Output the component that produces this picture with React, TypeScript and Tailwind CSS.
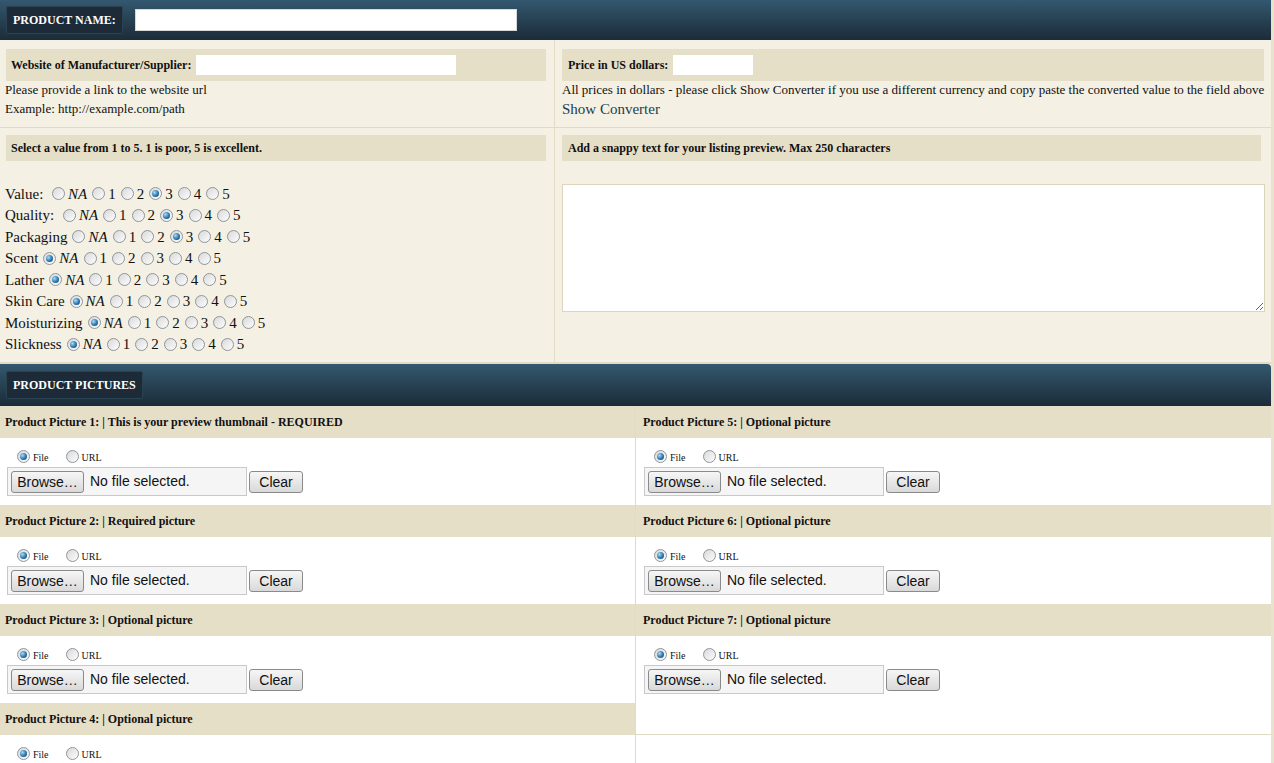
import React from 'react';

const serif = "font-['Liberation_Serif','Times_New_Roman',serif]";
const sans = "font-['Liberation_Sans',Arial,sans-serif]";

const Radio = ({ checked = false }: { checked?: boolean }) => (
  <span className="relative inline-block w-[13px] h-[13px] rounded-full border border-[#8f959b] bg-gradient-to-br from-[#d9d9d9] to-[#fdfdfd] align-middle shrink-0">
    {checked && (
      <span className="absolute left-[2px] top-[2px] w-[7px] h-[7px] rounded-full bg-[radial-gradient(circle_at_35%_35%,#a9dcf8,#2a76ad_55%,#0f3f69)]" />
    )}
  </span>
);

const BarLabel = ({ children }: { children: React.ReactNode }) => (
  <div className="h-[28px] px-[6px] flex items-center bg-[#1c2b37] border border-[#2b4252] rounded-[2px] text-white font-bold text-[12px] uppercase">
    {children}
  </div>
);

const ratings: { label: string; value: string }[] = [
  { label: 'Value:\u00a0', value: '3' },
  { label: 'Quality:\u00a0', value: '3' },
  { label: 'Packaging', value: '3' },
  { label: 'Scent', value: 'NA' },
  { label: 'Lather', value: 'NA' },
  { label: 'Skin Care', value: 'NA' },
  { label: 'Moisturizing', value: 'NA' },
  { label: 'Slickness', value: 'NA' },
];

const options = ['NA', '1', '2', '3', '4', '5'];

const RatingRow = ({ label, value }: { label: string; value: string }) => (
  <div className="h-[21.5px] flex items-center text-[15px] text-[#111] whitespace-pre">
    <span>{label}</span>
    {options.map((o) => (
      <span key={o} className="flex items-center">
        <span className="ml-[5px] mr-[3px] flex">
          <Radio checked={o === value} />
        </span>
        <span className={o === 'NA' ? 'italic' : ''}>{o}</span>
      </span>
    ))}
  </div>
);

const pictures = [
  { n: 1, note: 'This is your preview thumbnail - REQUIRED' },
  { n: 2, note: 'Required picture' },
  { n: 3, note: 'Optional picture' },
  { n: 4, note: 'Optional picture' },
];
const pictures2 = [
  { n: 5, note: 'Optional picture' },
  { n: 6, note: 'Optional picture' },
  { n: 7, note: 'Optional picture' },
];

const PictureItem = ({ n, note, right = false }: { n: number; note: string; right?: boolean }) => (
  <div>
    <div className={`h-[32px] ${right ? 'pl-[7px]' : 'pl-[5px]'} flex items-center bg-[#e6dfc8] text-[12px] font-bold text-[#111]`}>
      Product Picture {n}: | {note}
    </div>
    <div className={`h-[67px] bg-white pt-[11px] ${right ? 'pl-[8px]' : 'pl-[7px]'}`}>
      <div className="h-[14px] flex items-center text-[10px] text-[#111] pl-[10px]">
        <Radio checked />
        <span className="ml-[3px] mt-[2px]">File</span>
        <span className="ml-[17px] flex">
          <Radio />
        </span>
        <span className="ml-[3px] mt-[2px]">URL</span>
      </div>
      <div className={`mt-[4px] flex items-center ${sans}`}>
        <div className="w-[240px] h-[29px] border border-[#c9c9c9] bg-[#f5f5f5] flex items-center px-[3px]">
          <button className="w-[73px] h-[22px] border border-[#8a8a8a] rounded-[3px] bg-gradient-to-b from-[#f6f6f6] to-[#d9d9d9] text-[14px] text-[#111]">
            Browse…
          </button>
          <span className="ml-[6px] text-[14px] text-[#111]">No file selected.</span>
        </div>
        <button className="ml-[2px] w-[54px] h-[22px] border border-[#8a8a8a] rounded-[3px] bg-gradient-to-b from-[#f6f6f6] to-[#d9d9d9] text-[14px] text-[#111]">
          Clear
        </button>
      </div>
    </div>
  </div>
);

const App = () => {
  return (
    <div className={`min-h-[763px] w-[1274px] bg-[#e9e3cd] ${serif}`}>
      <div className="w-[1271px] bg-[#f4f0e3]">
        {/* product name bar */}
        <div className="h-[40px] px-[6px] flex items-center bg-gradient-to-b from-[#34586f] to-[#1b2c39]">
          <BarLabel>Product Name:</BarLabel>
          <input className="ml-[12px] w-[382px] h-[22px] bg-white border border-[#d8d8d8] outline-none" />
        </div>

        {/* website / price */}
        <div className="h-[88px] grid grid-cols-[555px_1fr] border-b border-[#e2dac2]">
          <div className="border-r border-[#e2dac2] pt-[9px] pl-[6px] pr-[8px]">
            <div className="h-[32px] bg-[#e6dfc8] flex items-center pl-[5px] text-[12px] font-bold text-[#111]">
              Website of Manufacturer/Supplier:
              <input className="ml-[5px] w-[260px] h-[20px] bg-white outline-none" />
            </div>
            <div className="-ml-[1px] -mt-[1px] text-[13px] leading-[19px] text-[#111]">
              <div>Please provide a link to the website url</div>
              <div>Example: http://example.com/path</div>
            </div>
          </div>
          <div className="pt-[9px] pl-[7px] pr-[10px]">
            <div className="h-[32px] bg-[#e6dfc8] flex items-center pl-[6px] text-[12px] font-bold text-[#111]">
              Price in US dollars:
              <input className="ml-[5px] w-[80px] h-[20px] bg-white outline-none" />
            </div>
            <div className="-mt-[1px] text-[13px] leading-[19px] text-[#111] whitespace-nowrap">
              All prices in dollars - please click Show Converter if you use a different currency and copy paste the converted value to the field above
            </div>
            <div className="text-[15px] leading-[20px] text-[#1e3c4e] cursor-pointer">Show Converter</div>
          </div>
        </div>

        {/* ratings / snappy text */}
        <div className="h-[236px] grid grid-cols-[555px_1fr] border-b-2 border-[#e2dac2]">
          <div className="border-r border-[#e2dac2] pt-[7px] pl-[6px] pr-[8px]">
            <div className="h-[26px] bg-[#e6dfc8] flex items-center pl-[5px] text-[12px] font-bold text-[#111]">
              Select a value from 1 to 5. 1 is poor, 5 is excellent.
            </div>
            <div className="mt-[22px] -ml-[1px]">
              {ratings.map((r) => (
                <RatingRow key={r.label} label={r.label} value={r.value} />
              ))}
            </div>
          </div>
          <div className="pt-[7px] pl-[7px] pr-[6px]">
            <div className="mr-[4px] h-[26px] bg-[#e6dfc8] flex items-center pl-[6px] text-[12px] font-bold text-[#111]">
              Add a snappy text for your listing preview. Max 250 characters
            </div>
            <textarea className="mt-[23px] block w-[703px] h-[128px] bg-white border border-[#ddd4bc] outline-none" />
          </div>
        </div>

        {/* product pictures bar */}
        <div className="h-[42px] px-[6px] flex items-center bg-gradient-to-b from-[#34586f] to-[#1b2c39] rounded-tr-[4px]">
          <BarLabel>Product Pictures</BarLabel>
        </div>

        <div className="grid grid-cols-[636px_1fr]">
          <div className="border-r border-[#e2dac2]">
            {pictures.map((p) => (
              <PictureItem key={p.n} n={p.n} note={p.note} />
            ))}
          </div>
          <div>
            {pictures2.map((p) => (
              <PictureItem key={p.n} n={p.n} note={p.note} right />
            ))}
            <div className="h-[32px] bg-white border-b border-[#e2dac2]" />
            <div className="h-[67px] bg-white" />
          </div>
        </div>
      </div>
    </div>
  );
};

export default App;
